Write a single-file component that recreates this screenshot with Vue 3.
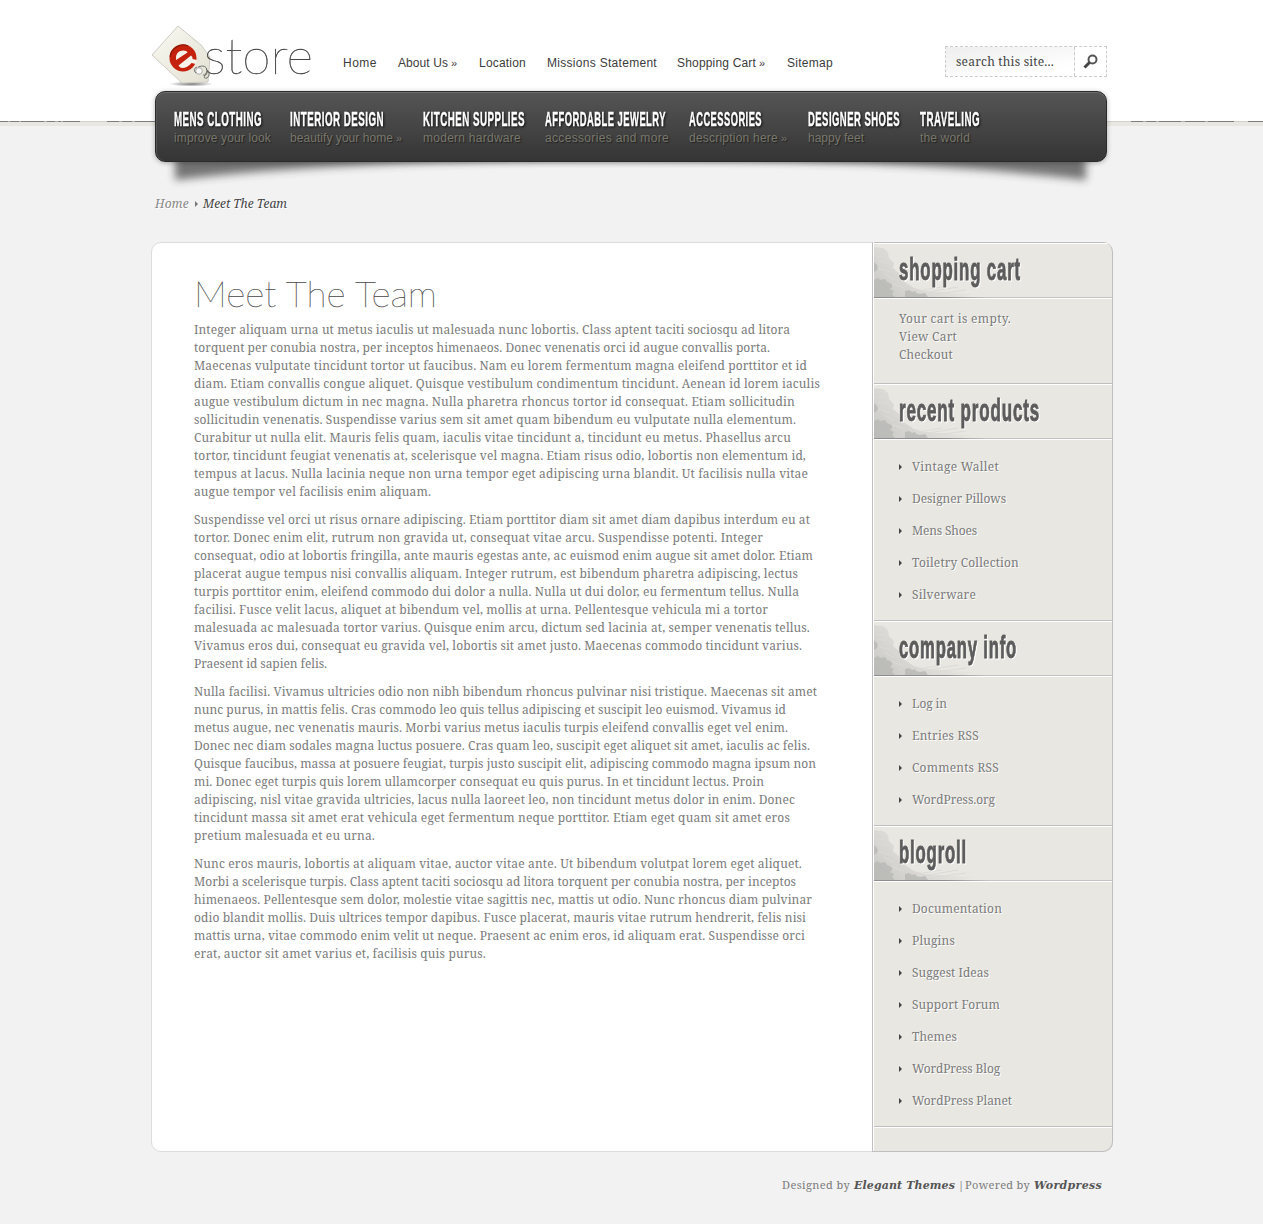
<script setup>
const topLinks = [
  { text: 'Home', w: 34, gap: 21 },
  { text: 'About Us', w: 50, gap: 22, more: true },
  { text: 'Location', w: 47, gap: 21 },
  { text: 'Missions Statement', w: 110, gap: 20 },
  { text: 'Shopping Cart', w: 79, gap: 22, more: true },
  { text: 'Sitemap', w: 46, gap: 0 },
]
const categories = [
  { title: 'MENS CLOTHING', tw: 88, sub: 'improve your look', sw: 97, w: 116 },
  { title: 'INTERIOR DESIGN', tw: 94, sub: 'beautify your home', sw: 103, w: 133, more: true },
  { title: 'KITCHEN SUPPLIES', tw: 102, sub: 'modern hardware', sw: 98, w: 122 },
  { title: 'AFFORDABLE JEWELRY', tw: 121, sub: 'accessories and more', sw: 124, w: 144 },
  { title: 'ACCESSORIES', tw: 73, sub: 'description here', sw: 89, w: 119, more: true },
  { title: 'DESIGNER SHOES', tw: 92, sub: 'happy feet', sw: 56, w: 112 },
  { title: 'TRAVELING', tw: 60, sub: 'the world', sw: 50, w: 62 },
]
const paragraphs = [
  [
    ['Integer aliquam urna ut metus iaculis ut malesuada nunc lobortis. Class aptent taciti sociosqu ad litora', 596],
    ['torquent per conubia nostra, per inceptos himenaeos. Donec venenatis orci id augue convallis porta.', 576],
    ['Maecenas vulputate tincidunt tortor ut faucibus. Nam eu lorem fermentum magna eleifend porttitor et id', 613],
    ['diam. Etiam convallis congue aliquet. Quisque vestibulum condimentum tincidunt. Aenean id lorem iaculis', 626],
    ['augue vestibulum dictum in nec magna. Nulla pharetra rhoncus tortor id consequat. Etiam sollicitudin', 601],
    ['sollicitudin venenatis. Suspendisse varius sem sit amet quam bibendum eu vulputate nulla elementum.', 602],
    ['Curabitur ut nulla elit. Mauris felis quam, iaculis vitae tincidunt a, tincidunt eu metus. Phasellus arcu', 597],
    ['tortor, tincidunt feugiat venenatis at, scelerisque vel magna. Etiam risus odio, lobortis non elementum id,', 612],
    ['tempus at lacus. Nulla lacinia neque non urna tempor eget adipiscing urna blandit. Ut facilisis nulla vitae', 614],
    ['augue tempor vel facilisis enim aliquam.', 237],
  ],
  [
    ['Suspendisse vel orci ut risus ornare adipiscing. Etiam porttitor diam sit amet diam dapibus interdum eu at', 616],
    ['tortor. Donec enim elit, rutrum non gravida ut, consequat vitae arcu. Suspendisse potenti. Integer', 569],
    ['consequat, odio at lobortis fringilla, ante mauris egestas ante, ac euismod enim augue sit amet dolor. Etiam', 619],
    ['placerat augue tempus nisi convallis aliquam. Integer rutrum, est bibendum pharetra adipiscing, lectus', 604],
    ['turpis porttitor enim, eleifend commodo dui dolor a nulla. Nulla ut dui dolor, eu fermentum tellus. Nulla', 605],
    ['facilisi. Fusce velit lacus, aliquet at bibendum vel, mollis at urna. Pellentesque vehicula mi a tortor', 574],
    ['malesuada ac malesuada tortor varius. Quisque enim arcu, dictum sed lacinia at, semper venenatis tellus.', 616],
    ['Vivamus eros dui, consequat eu gravida vel, lobortis sit amet justo. Maecenas commodo tincidunt varius.', 608],
    ['Praesent id sapien felis.', 133],
  ],
  [
    ['Nulla facilisi. Vivamus ultricies odio non nibh bibendum rhoncus pulvinar nisi tristique. Maecenas sit amet', 623],
    ['nunc purus, in mattis felis. Cras commodo leo quis tellus adipiscing et suscipit leo euismod. Vivamus id', 592],
    ['metus augue, nec venenatis mauris. Morbi varius metus iaculis turpis eleifend convallis eget vel enim.', 594],
    ['Donec nec diam sodales magna luctus posuere. Cras quam leo, suscipit eget aliquet sit amet, iaculis ac felis.', 616],
    ['Quisque faucibus, massa at posuere feugiat, turpis justo suscipit elit, adipiscing commodo magna ipsum non', 622],
    ['mi. Donec eget turpis quis lorem ullamcorper consequat eu quis purus. In et tincidunt lectus. Proin', 570],
    ['adipiscing, nisl vitae gravida ultricies, lacus nulla laoreet leo, non tincidunt metus dolor in enim. Donec', 601],
    ['tincidunt massa sit amet erat vehicula eget fermentum neque porttitor. Etiam eget quam sit amet eros', 596],
    ['pretium malesuada et eu urna.', 181],
  ],
  [
    ['Nunc eros mauris, lobortis at aliquam vitae, auctor vitae ante. Ut bibendum volutpat lorem eget aliquet.', 608],
    ['Morbi a scelerisque turpis. Class aptent taciti sociosqu ad litora torquent per conubia nostra, per inceptos', 602],
    ['himenaeos. Pellentesque sem dolor, molestie vitae sagittis nec, mattis ut odio. Nunc rhoncus diam pulvinar', 618],
    ['odio blandit mollis. Duis ultrices tempor dapibus. Fusce placerat, mauris vitae rutrum hendrerit, felis nisi', 612],
    ['mattis urna, vitae commodo enim velit ut neque. Praesent ac enim eros, id aliquam erat. Suspendisse orci', 611],
    ['erat, auctor sit amet varius et, facilisis quis purus.', 292],
  ],
]
const widgets = [
  { title: 'shopping cart', w: 122, lines: [['Your cart is empty.', 112], ['View Cart', 58], ['Checkout', 54]] },
  { title: 'recent products', w: 141, items: [['Vintage Wallet', 87], ['Designer Pillows', 94], ['Mens Shoes', 65], ['Toiletry Collection', 107], ['Silverware', 64]] },
  { title: 'company info', w: 118, items: [['Log in', 35], ['Entries RSS', 67], ['Comments RSS', 87], ['WordPress.org', 83]] },
  { title: 'blogroll', w: 68, items: [['Documentation', 90], ['Plugins', 43], ['Suggest Ideas', 77], ['Support Forum', 88], ['Themes', 45], ['WordPress Blog', 88], ['WordPress Planet', 100]] },
]

// Tracks the text so that it sets to the given measure.
const vFit = {
  mounted(el, { value }) {
    const natural = el.getBoundingClientRect().width
    el.style.letterSpacing = `${(value - natural) / el.textContent.length}px`
  },
}
</script>

<template>
  <div class="page">
    <svg class="torn" width="1263" height="5" aria-hidden="true">
      <defs>
        <pattern id="edge" width="256" height="5" patternUnits="userSpaceOnUse">
          <rect y="1" width="256" height="4" fill="#e8e7e2" />
          <rect width="256" height="1" fill="#7d7d7b" />
          <path d="M8 .5h2m9 0h2m23 0h3m8 0h3m3 0h2m56 0h3m10 0h3m22 0h4m20 0h3m26 0h3" stroke="#aeaeab" />
          <path d="M80 .5h27m103 0h14" stroke="#d2d1cc" />
        </pattern>
      </defs>
      <rect width="1263" height="5" fill="url(#edge)" />
    </svg>

    <header class="top">
      <svg class="logo" width="170" height="69" viewBox="0 0 170 69">
        <defs>
          <linearGradient id="paper" x1="0" y1="0" x2="1" y2="1">
            <stop offset="0" stop-color="#faf9f3" /><stop offset="1" stop-color="#e3e1d2" />
          </linearGradient>
          <radialGradient id="floor"><stop offset="0" stop-color="#777" /><stop offset="1" stop-color="#777" stop-opacity="0" /></radialGradient>
        </defs>
        <ellipse cx="40" cy="62" rx="22" ry="2.600" fill="url(#floor)" />
        <path d="M27 4 1 33l30 28 26-1 2-25-9-12z" fill="url(#paper)" stroke="#cdccc3" />
        <circle cx="32" cy="36" r="13.500" fill="#c4220c" />
        <path d="M19.200 35a13 13 0 0 1 18-11" fill="none" stroke="#8e1808" stroke-width="1.300" />
        <path d="M25 38q-1-9 7-9.500 4 0 4.500 2z" fill="#f5f3ea" />
        <path d="M27.500 43.500 40 33.500q2 1 1.500 3.500l4.500 1-1 4-4.500-1q-4 5-9.500 5-2.500-.5-3.500-2.500z" fill="#f5f3ea" />
        <text x="53" y="52" class="logo-text" textLength="109" lengthAdjust="spacingAndGlyphs">store</text>
        <circle cx="48" cy="49" r="3.300" fill="#fff" stroke="#aaa" />
        <path d="M46 45q-5 2-1 6m2-6q8-3 9 3t-4 5m3-6q6 5 1 9-4 1-2-3t3-5" fill="none" stroke="#666" stroke-width=".9" />
      </svg>
      <nav class="links">
        <a v-for="l in topLinks" :key="l.text" :style="{ marginRight: l.gap + 'px' }"><span v-fit="l.w">{{ l.text }}</span><i v-if="l.more">»</i></a>
      </nav>
      <div class="search">
        <div class="field"><span v-fit="98">search this site...</span></div>
        <svg width="31" height="29" viewBox="0 0 31 29"><circle cx="17.500" cy="12.500" r="4" fill="none" stroke="#555" stroke-width="2" /><path d="m14.500 15.500-5 5" stroke="#444" stroke-width="3" /></svg>
      </div>
    </header>

    <div class="bar-wrap">
      <svg class="bar-shadow" width="956" height="40" viewBox="0 0 956 40">
        <defs><filter id="soft" x="-5%" y="-60%" width="110%" height="220%"><feGaussianBlur stdDeviation="4" /></filter></defs>
        <path d="M20 0H931V26Q760 5 478 5T20 26z" fill="#333" opacity=".66" filter="url(#soft)" />
      </svg>
      <nav class="bar">
        <div v-for="c in categories" :key="c.title" :style="{ width: c.w + 'px' }">
          <svg class="cat" :width="c.tw + 3" height="19"><text y="16.500" :textLength="c.tw" lengthAdjust="spacingAndGlyphs">{{ c.title }}</text></svg>
          <p><span v-fit="c.sw">{{ c.sub }}</span><i v-if="c.more">»</i></p>
        </div>
      </nav>
    </div>

    <div class="crumbs"><a><span v-fit="34">Home</span></a><b class="tri"></b><span v-fit="84">Meet The Team</span></div>

    <div class="panel">
      <main>
        <svg class="title" width="260" height="36"><text x="0" y="29" textLength="243" lengthAdjust="spacingAndGlyphs">Meet The Team</text></svg>
        <p v-for="(p, i) in paragraphs" :key="i">
          <span v-for="(l, j) in p" :key="j" v-fit="l[1]" class="line">{{ l[0] }}</span>
        </p>
      </main>
      <aside>
        <section v-for="s in widgets" :key="s.title">
          <h4>
            <svg width="238" height="53" viewBox="0 0 238 53">
              <defs>
                <linearGradient id="wash" gradientUnits="userSpaceOnUse" x1="0" y1="53" x2="45" y2="5"><stop offset="0" stop-color="#c6c6c3" /><stop offset=".5" stop-color="#d8d7d3" /><stop offset="1" stop-color="#e5e4df" /></linearGradient>
              </defs>
              <path d="M0 3l9 1 5 4 1 6 5 5-1 5 6 5 1 6 8 5 6 4 12 3 14 1 13 1 20 1-8 3H0z" fill="url(#wash)" />
              <path d="M3 6h9M2 12l9 1m-7 4 9 2M4 24l12 4M10 30l10 6M16 39l14 5M44 47l24-4m-20 6 36-6M62 50l30-4" fill="none" stroke="#dcdbd6" />
              <path d="M0 36l4-2 2 2 5-1 2 3 5 2v3l-2 2 4 2-2 3 3 3H0zM0 18l3 3 1 3-2 3-2 1zM31 53v-6l4-1 3 2 3-1 1 2 4 1 5-1 3 4z" fill="#b8b8b5" opacity=".8" />
              <text x="25" y="36" :textLength="s.w" lengthAdjust="spacingAndGlyphs">{{ s.title }}</text>
            </svg>
          </h4>
          <div v-if="s.lines" class="cart"><div v-for="l in s.lines" :key="l[0]"><span v-fit="l[1]">{{ l[0] }}</span></div></div>
          <ul v-else><li v-for="l in s.items" :key="l[0]"><b class="tri dark"></b><span v-fit="l[1]">{{ l[0] }}</span></li></ul>
        </section>
        <div class="end"></div>
      </aside>
    </div>

    <footer><span v-fit="68">Designed by</span><b v-fit="101">Elegant Themes</b><span class="pipe">|</span><span v-fit="65">Powered by</span><b v-fit="68">Wordpress</b></footer>
  </div>
</template>

<style>
body { margin: 0; background: #f2f2f2; }
</style>
<style scoped>
.page { position: relative; box-sizing: border-box; width: 1263px; height: 1224px; padding-left: 151px; overflow: hidden; background: linear-gradient(#fff 121px, #f2f2f2 121px); font: 12px/18px "Droid Serif", "Noto Serif", "DejaVu Serif Condensed", "DejaVu Serif", serif; color: #7b7b7b; }
span, .page footer b { display: inline-block; white-space: nowrap; }
i { font-style: normal; }
.torn { position: absolute; left: 0; top: 121px; }
.top { display: flex; height: 91px; width: 956px; }
.logo { margin-top: 22px; flex: none; overflow: visible; }
.logo-text { font: 100 49px Lato, sans-serif; fill: #444; stroke: #444; stroke-width: .4px; }
.links { display: flex; margin: 54px 0 0 22px; font: 12px/18px "Liberation Sans", Arial, sans-serif; color: #3c3c3c; height: 18px; }
.links a { display: flex; white-space: nowrap; }
.links i { font-size: 11px; width: 6px; margin-left: 3px; }
.search { display: flex; box-sizing: border-box; width: 162px; height: 31px; margin: 46px 0 0 auto; border: 1px dashed #ccc; background: #fff; color: #444; }
.field { box-sizing: border-box; width: 129px; padding: 6px 0 0 10px; border-right: 1px dashed #ccc; background: linear-gradient(170deg, #eee, #fff 80%); }
.bar-wrap { position: relative; width: 952px; margin-left: 4px; }
.bar-shadow { position: absolute; left: 0; top: 63px; overflow: visible; }
.bar { position: relative; display: flex; box-sizing: border-box; height: 71px; padding: 17px 0 0 18px; border: 1px solid #2b2b2b; border-radius: 10px; background: linear-gradient(#555, #353535); box-shadow: inset 0 1px #6d6d6d, inset 1px 0 #555, 0 1px 5px rgba(0,0,0,.3); }
.bar > div { flex: none; }
.cat { display: block; overflow: visible; }
.cat text { font: bold 21px "Liberation Sans Narrow", "Liberation Sans", sans-serif; letter-spacing: 1px; fill: #fff; stroke: #fff; stroke-width: .4px; filter: drop-shadow(1px 1px 1px #111); }
.bar p { display: flex; margin: 1px 0 0; font: 12px/18px "Liberation Sans", Arial, sans-serif; color: #78776b; text-shadow: 1px 1px 1px #222; }
.bar p i { margin-left: 3px; font-size: 11px; }
.crumbs { display: flex; align-items: center; height: 18px; margin: 33px 0 29px 4px; font-style: italic; color: #444; text-shadow: 1px 1px #fff; }
.crumbs a { color: #888; }
.tri { width: 0; height: 0; border: solid transparent; border-width: 3px 0 3px 3px; border-left-color: #777; }
.crumbs .tri { margin: 0 5px 0 6px; }
.panel { display: flex; box-sizing: border-box; width: 962px; height: 910px; border: 1px solid #ddd; border-radius: 10px; background: #fff; }
main { box-sizing: border-box; width: 720px; padding: 35px 0 0 42px; }
.title { display: block; overflow: visible; }
.title text { font: 100 36px Lato, sans-serif; fill: #444; stroke: #444; stroke-width: .25px; }
main p { margin: 7px 0 0; }
main p + p { margin-top: 10px; }
.line { display: table; }
aside { box-sizing: border-box; width: 241px; height: 910px; margin: -1px -1px -1px 0; border: 1px solid #bfbfbf; border-top: 0; border-radius: 0 10px 10px 0; background: #e8e7e2; box-shadow: inset 1px 0 #fff; overflow: hidden; text-shadow: 1px 1px #fff; }
h4 { box-sizing: border-box; height: 57px; margin: 0 0 0 1px; border-top: 1px solid #bfbfbf; border-bottom: 1px solid #fff; box-shadow: inset 0 1px #fff; padding-top: 1px; text-shadow: none; }
h4 svg { display: block; border-bottom: 1px solid; border-image: linear-gradient(90deg, #8e8e8e 30%, #c3c3c3 48%) 1; overflow: visible; }
h4 text { font: bold 30.5px "Liberation Sans Narrow", "Liberation Sans", sans-serif; letter-spacing: 1.5px; fill: #5c5c5c; stroke: #5c5c5c; stroke-width: .9px; filter: drop-shadow(1px 1px 0 #fff); }
.cart { box-sizing: border-box; height: 84px; padding: 11px 0 0 26px; }
ul { list-style: none; margin: 0; padding: 11px 0 9px 26px; }
li { display: flex; align-items: center; height: 32px; }
.dark { border-left-color: #444; margin-right: 10px; }
.end { height: 1px; margin-left: 1px; border-top: 1px solid #bfbfbf; background: #fff; }
footer { display: flex; align-items: baseline; width: 951px; margin-top: 24px; justify-content: flex-end; font-size: 11px; line-height: 18px; }
footer b { margin-left: 4px; font-family: "DejaVu Serif", serif; font-style: italic; color: #555; }
.pipe { width: 3px; margin: 0 4px 0 3px; }
</style>
